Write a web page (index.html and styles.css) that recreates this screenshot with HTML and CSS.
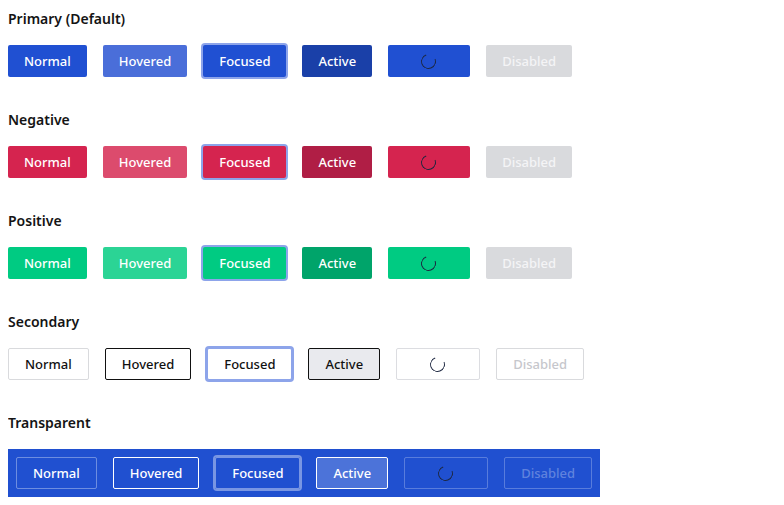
FILE: index.html
```html
<!DOCTYPE html>
<html>
<head>
<meta charset="utf-8">
<link rel="stylesheet" href="styles.css">
</head>
<body>
<section class="group">
  <h2 class="title">Primary (Default)</h2>
  <div class="row">
    <button class="btn primary">Normal</button>
    <button class="btn primary hover">Hovered</button>
    <button class="btn primary focus">Focused</button>
    <button class="btn primary active">Active</button>
    <button class="btn primary loading"><span class="ghost">Loading</span><span class="spin"></span></button>
    <button class="btn primary disabled">Disabled</button>
  </div>
</section>
<section class="group">
  <h2 class="title">Negative</h2>
  <div class="row">
    <button class="btn negative">Normal</button>
    <button class="btn negative hover">Hovered</button>
    <button class="btn negative focus">Focused</button>
    <button class="btn negative active">Active</button>
    <button class="btn negative loading"><span class="ghost">Loading</span><span class="spin"></span></button>
    <button class="btn negative disabled">Disabled</button>
  </div>
</section>
<section class="group">
  <h2 class="title">Positive</h2>
  <div class="row">
    <button class="btn positive">Normal</button>
    <button class="btn positive hover">Hovered</button>
    <button class="btn positive focus">Focused</button>
    <button class="btn positive active">Active</button>
    <button class="btn positive loading"><span class="ghost">Loading</span><span class="spin"></span></button>
    <button class="btn positive disabled">Disabled</button>
  </div>
</section>
<section class="group">
  <h2 class="title">Secondary</h2>
  <div class="row">
    <button class="btn secondary">Normal</button>
    <button class="btn secondary hover">Hovered</button>
    <button class="btn secondary focus">Focused</button>
    <button class="btn secondary active">Active</button>
    <button class="btn secondary loading"><span class="ghost">Loading</span><span class="spin"></span></button>
    <button class="btn secondary disabled">Disabled</button>
  </div>
</section>
<section class="group">
  <h2 class="title">Transparent</h2>
  <div class="row dark">
    <button class="btn transparent">Normal</button>
    <button class="btn transparent hover">Hovered</button>
    <button class="btn transparent focus">Focused</button>
    <button class="btn transparent active">Active</button>
    <button class="btn transparent loading"><span class="ghost">Loading</span><span class="spin"></span></button>
    <button class="btn transparent disabled">Disabled</button>
  </div>
</section>
</body>
</html>
```
FILE: styles.css
```css
body {
  margin: 8px;
  font-family: "Noto Sans", "Open Sans", sans-serif;
  background: #fff;
  color: #111;
}
.group {
  margin: 0 0 32px 0;
}
.group:last-child {
  margin-bottom: 0;
}
.title {
  margin: 0 0 16px 0;
  padding-top: 1px;
  font-size: 14px;
  line-height: 20px;
  font-weight: 600;
  color: #141414;
}
.row {
  display: flex;
  gap: 16px;
  align-items: center;
}
.row.dark {
  display: inline-flex;
  background: #2050d0;
  padding: 8px;
}
.btn {
  position: relative;
  box-sizing: border-box;
  height: 32px;
  padding: 0 16px;
  border: none;
  border-radius: 2px;
  font-family: "Noto Sans", "Open Sans", sans-serif;
  font-size: 13px;
  font-weight: 500;
  color: #fff;
  cursor: pointer;
}
.ghost { visibility: hidden; }
.spin {
  position: absolute;
  left: 50%;
  top: 50%;
  width: 15px;
  height: 15px;
  margin: -7px 0 0 -8px;
  box-sizing: border-box;
  border-radius: 50%;
  border: 1.6px solid #1d2740;
  border-top-color: transparent;
  transform: rotate(25deg);
}
.focus { box-shadow: 0 0 0 2px #8da4ea; }

.primary { background: #2050d2; }
.primary.hover { background: #4a6ed9; }
.primary.active { background: #1a40a8; }

.negative { background: #d5244f; }
.negative.hover { background: #dc4b6d; }
.negative.active { background: #b01e45; }

.positive { background: #00cb82; }
.positive.hover { background: #2bd495; }
.positive.active { background: #00a46a; }

.disabled { background: #d9dadd; color: #f4f4f6; }

.secondary {
  background: #fff;
  color: #111;
  border: 1px solid #d9dadd;
}
.secondary.hover { border-color: #111; }
.secondary.focus { border-color: #8da4ea; }
.secondary.active { background: #e9eaee; border-color: #111; }
.secondary.loading { border-color: #dcdde1; }
.secondary.disabled { background: #fff; color: #c6c7cc; border-color: #d9dadd; }

.transparent {
  background: transparent;
  color: #fff;
  border: 1px solid rgba(255,255,255,0.35);
}
.transparent.hover { border-color: #fff; }
.transparent.focus { border-color: rgba(255,255,255,0.4); box-shadow: 0 0 0 2px rgba(255,255,255,0.4); }
.transparent.active { background: rgba(255,255,255,0.2); border-color: #fff; }
.transparent.loading { border-color: rgba(255,255,255,0.25); }
.transparent.disabled { background: transparent; color: rgba(255,255,255,0.3); border-color: rgba(255,255,255,0.25); }
```
